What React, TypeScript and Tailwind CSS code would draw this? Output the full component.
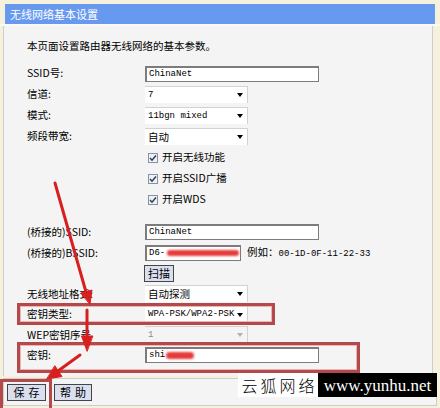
import React from "react";

const cjk = "font-['Noto_Sans_CJK_SC',sans-serif]";
const mono = "font-['Liberation_Mono','Noto_Sans_CJK_SC',monospace]";

function Row({ label, children, h = "h-[21px]" }: { label?: string; children?: React.ReactNode; h?: string }) {
  return (
    <div className={`flex items-center ${h}`}>
      <div className="w-[118px] shrink-0 whitespace-nowrap">{label}</div>
      {children}
    </div>
  );
}

function TextBox({ value, w = "w-[174px]", children }: { value?: string; w?: string; children?: React.ReactNode }) {
  return (
    <div
      className={`${w} h-[16px] bg-white border border-t-2 border-l-2 border-[#7c7c7c] flex items-center pl-[2px] ${mono} text-[9px] text-black`}
    >
      {value}
      {children}
    </div>
  );
}

function Select({ value, disabled = false }: { value: string; disabled?: boolean }) {
  return (
    <div
      className={`w-[103px] h-[17px] border-t border-r border-[#d2d2d2] flex items-center justify-between pl-[3px] pr-[4px] ${
        disabled ? "bg-[#f4f4f4] text-[#8a8a8a]" : "bg-white text-black"
      } ${value === "自动" || value === "自动探测" ? `${cjk} text-[10.5px]` : `${mono} text-[9px]`}`}
    >
      <span className="whitespace-nowrap">{value}</span>
      <span
        className={`w-0 h-0 border-l-[3.5px] border-r-[3.5px] border-t-[4px] border-l-transparent border-r-transparent ${
          disabled ? "border-t-[#b0b0b0]" : "border-t-black"
        }`}
      />
    </div>
  );
}

function Check({ text }: { text: string }) {
  return (
    <div className="flex items-center pl-[3px]">
      <span className="w-[10px] h-[10px] border border-[#8593aa] bg-[#eef0f4] flex items-center justify-center">
        <svg width="8" height="8" viewBox="0 0 8 8">
          <path d="M1 4 L3 6.2 L7 1.5" stroke="#2a3a52" strokeWidth="1.4" fill="none" />
        </svg>
      </span>
      <span className="ml-[4px]">{text}</span>
    </div>
  );
}

function Btn({ text, w, wide = true }: { text: string; w: string; wide?: boolean }) {
  return (
    <div
      className={`${w} h-[17px] bg-[#dadff0] border border-[#454545] flex items-center justify-center whitespace-nowrap ${cjk} text-[11px] text-black ${
        wide ? "tracking-[4px] pl-[4px]" : "tracking-[0px]"
      }`}
    >
      {text}
    </div>
  );
}

export default function App() {
  return (
    <div className={`relative w-[440px] h-[408px] overflow-hidden bg-[#f6f1dc] ${cjk} text-[10.5px] text-black leading-none`}>
      <div className="pt-[4px] pl-[5px]">
        <div className="w-[430px] h-[20px] bg-[#6799ef] text-white text-[11px] flex items-center pl-[5px]">
          无线网络基本设置
        </div>
      </div>
      <div className="h-[2px] bg-[#f9f9f9]" />
      <div className="ml-[3px] w-[430px] h-[350px] bg-[#f4f4f4] border-l border-r border-[#cdcdcd] pl-[23px] pt-[12px]">
        <div className="h-[16px] flex items-center">本页面设置路由器无线网络的基本参数。</div>
        <div className="h-[9px]" />
        <Row label="SSID号:">
          <TextBox value="ChinaNet" />
        </Row>
        <Row label="信道:">
          <Select value="7" />
        </Row>
        <Row label="模式:">
          <Select value="11bgn mixed" />
        </Row>
        <Row label="频段带宽:">
          <Select value="自动" />
        </Row>
        <Row>
          <Check text="开启无线功能" />
        </Row>
        <Row>
          <Check text="开启SSID广播" />
        </Row>
        <Row>
          <Check text="开启WDS" />
        </Row>
        <div className="h-[12px]" />
        <Row label="(桥接的)SSID:" h="h-[20.5px]">
          <TextBox value="ChinaNet" />
        </Row>
        <Row label="(桥接的)BSSID:" h="h-[20.5px]">
          <TextBox value="D6-" w="w-[96px]">
            <span className="ml-[2px] w-[72px] h-[6px] rounded-full bg-[#e63b3b] blur-[0.8px]" />
          </TextBox>
          <span className="ml-[6px] whitespace-nowrap">
            例如：<span className={`${mono} text-[9px]`}>00-1D-0F-11-22-33</span>
          </span>
        </Row>
        <Row h="h-[20.5px]">
          <div className="-ml-[1px]">
            <Btn text="扫描" w="w-[30px]" wide={false} />
          </div>
        </Row>
        <Row label="无线地址格式:" h="h-[20.5px]">
          <Select value="自动探测" />
        </Row>
        <Row label="密钥类型:" h="h-[20.5px]">
          <Select value="WPA-PSK/WPA2-PSK" />
        </Row>
        <Row label="WEP密钥序号" h="h-[20.5px]">
          <Select value="1" disabled />
        </Row>
        <Row label="密钥:" h="h-[20.5px]">
          <TextBox value="shi">
            <span className="ml-[1px] w-[28px] h-[7px] rounded-full bg-[#e63b3b] blur-[0.8px]" />
          </TextBox>
        </Row>
      </div>
      <div className="ml-[3px] mt-[2px] w-[434px] h-[28px] bg-[#f4f4f4] border border-[#cdcdcd] flex items-center gap-[8px] pl-[3px]">
        <Btn text="保存" w="w-[39px]" />
        <Btn text="帮助" w="w-[38px]" />
      </div>

      {/* annotations drawn over the screenshot */}
      <div className="absolute left-[17px] top-[303px] w-[258px] h-[22px] border-[3px] border-[#b4494b] shadow-[inset_0_0_0_1px_#e9b5b5]" />
      <div className="absolute left-[17px] top-[342px] w-[343px] h-[31px] border-[3px] border-[#b4494b] shadow-[inset_0_0_0_1px_#e9b5b5]" />
      <div className="absolute left-[0px] top-[379px] w-[52px] h-[32px] border-[3px] border-[#b4494b]" />
      <svg className="absolute inset-0 pointer-events-none" width="440" height="408">
        <g fill="#d81f1f" stroke="#d81f1f" strokeWidth="3" strokeLinecap="round">
          <line x1="55" y1="183" x2="86" y2="292" />
          <polygon points="90,304 92,290 81,293" strokeWidth="1" />
          <line x1="87" y1="310" x2="87" y2="338" />
          <polygon points="87,351 81.5,336 92.5,336" strokeWidth="1" />
          <line x1="80" y1="355" x2="58" y2="371" />
          <polygon points="47,379 62,376.5 55,366" strokeWidth="1" />
        </g>
      </svg>
      <div className="absolute left-[238px] top-[373px] flex h-[24px]">
        <div className="w-[80px] bg-white flex items-center justify-center whitespace-nowrap text-[16px] tracking-[3px] pl-[3px] font-['Noto_Sans_CJK_SC',serif] font-light">
          云狐网络
        </div>
        <div className="w-[119px] bg-black text-white flex items-center justify-center whitespace-nowrap text-[17px] font-['Liberation_Serif',serif]">
          www.yunhu.net
        </div>
      </div>
    </div>
  );
}
